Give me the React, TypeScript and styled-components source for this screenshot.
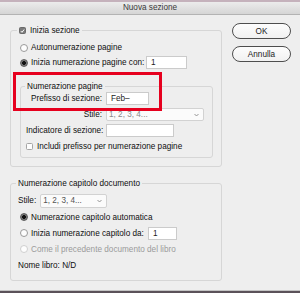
import React from "react";
import styled, { createGlobalStyle } from "styled-components";

const Global = createGlobalStyle`
  html, body { margin: 0; padding: 0; background: #eeeeee; }
  body { font-family: "Liberation Sans", Arial, sans-serif; font-size: 8.2px; color: #0e0e0e; }
  * { box-sizing: border-box; }
`;

const Win = styled.div`
  width: 300px;
  height: 293px;
  display: flex;
  flex-direction: column;
  background: #eeeeee;
  overflow: hidden;
`;

const Desktop = styled.div<{ $h: number; $c: string }>`
  height: ${(p) => p.$h}px;
  flex: none;
  background: ${(p) => p.$c};
`;

const TitleBar = styled.div`
  height: 13px;
  flex: none;
  display: flex;
  align-items: center;
  justify-content: center;
  background: linear-gradient(#ececec, #d5d5d5);
  border-bottom: 1px solid #b3b3b3;
  color: #3a3a3a;
  font-size: 8.2px;
  padding-bottom: 1px;
`;

const Body = styled.div`
  flex: 1;
  display: flex;
  padding: 8px 0 0 10px;
`;

const LeftColumn = styled.div`
  position: relative;
  width: 212px;
  padding-top: 2px;
  display: flex;
  flex-direction: column;
`;

const Group = styled.fieldset<{ $pad: string; $mt?: number }>`
  margin: ${(p) => p.$mt ?? 0}px 0 0 0;
  min-width: 0;
  border: 1px solid #d6d6d6;
  border-radius: 3px;
  padding: ${(p) => p.$pad};
  display: flex;
  flex-direction: column;
`;

const Legend = styled.legend<{ $ml: number }>`
  padding: 0 2px;
  margin-left: ${(p) => p.$ml}px;
  height: 11px;
  line-height: 11px;
  display: flex;
  align-items: center;
  gap: 4px;
`;

const Row = styled.div<{ $h: number; $ml?: number }>`
  height: ${(p) => p.$h}px;
  display: flex;
  align-items: center;
  margin-left: ${(p) => p.$ml ?? 0}px;
  white-space: nowrap;
`;

const RadioCircle = styled.span<{ $on?: boolean; $dis?: boolean }>`
  width: 8px;
  height: 8px;
  flex: none;
  border-radius: 50%;
  border: 1px solid ${(p) => (p.$on ? "#5a5a5a" : p.$dis ? "#cfcfcf" : "#9a9a9a")};
  background: ${(p) => (p.$on ? "radial-gradient(circle, #111 0 1.6px, #7a7a7a 2.2px)" : "#fdfdfd")};
  margin-right: 3px;
`;

const Text = styled.span<{ $w?: number; $dim?: boolean }>`
  ${(p) => (p.$w ? `width: ${p.$w}px;` : "")}
  color: ${(p) => (p.$dim ? "#9b9b9b" : "#0e0e0e")};
  white-space: nowrap;
`;

const Field = styled.div<{ $w: number; $h: number }>`
  width: ${(p) => p.$w}px;
  height: ${(p) => p.$h}px;
  background: #ffffff;
  border: 1px solid #cbcbcb;
  display: flex;
  align-items: center;
  padding-left: 4px;
  color: #1c1c1c;
`;

const Select = styled.div<{ $w: number; $h: number; $light?: boolean; $ml?: number }>`
  width: ${(p) => p.$w}px;
  height: ${(p) => p.$h}px;
  margin-left: ${(p) => p.$ml ?? 0}px;
  background: #fbfbfb;
  border: 1px solid #d2d2d2;
  border-radius: 2px;
  display: flex;
  align-items: center;
  justify-content: space-between;
  padding: 0 4px 0 2px;
  color: ${(p) => (p.$light ? "#8a8a8a" : "#555")};
`;

const Check = styled.span<{ $on?: boolean }>`
  width: 7px;
  height: 7px;
  flex: none;
  border-radius: 1.5px;
  border: 1px solid ${(p) => (p.$on ? "#6a6a6a" : "#a5a5a5")};
  background: ${(p) => (p.$on ? "#7b7b7b" : "#fdfdfd")};
  display: flex;
  align-items: center;
  justify-content: center;
`;

const Grid = styled.div`
  display: grid;
  grid-template-columns: 76px auto;
  column-gap: 4px;
  row-gap: 3px;
  grid-auto-rows: 13px;
  align-items: center;
`;

const GridLabel = styled.span`
  text-align: right;
  white-space: nowrap;
`;

const GridFull = styled.div`
  grid-column: 1 / span 2;
  display: flex;
  align-items: center;
  gap: 4px;
  white-space: nowrap;
`;

const RedMark = styled.div`
  position: absolute;
  left: 3px;
  top: 49px;
  width: 149px;
  height: 39px;
  border: 3px solid #e6001e;
  pointer-events: none;
`;

const ButtonColumn = styled.div`
  margin-left: 10px;
  display: flex;
  flex-direction: column;
  gap: 7px;
`;

const Button = styled.div`
  width: 59px;
  height: 16px;
  border: 1px solid #4e4e4e;
  border-radius: 8px;
  background: linear-gradient(#fdfdfd, #f1f1f1);
  display: flex;
  align-items: center;
  justify-content: center;
  color: #222;
`;

const Chevron = () => (
  <svg width="5" height="4" viewBox="0 0 5 4">
    <path d="M0.5 1 L2.5 3 L4.5 1" fill="none" stroke="#8a8a8a" strokeWidth="0.9" />
  </svg>
);

const Tick = () => (
  <svg width="6" height="6" viewBox="0 0 6 6">
    <path d="M1 3.1 L2.4 4.6 L5 1.2" fill="none" stroke="#fff" strokeWidth="1.2" />
  </svg>
);

export default function App() {
  return (
    <>
      <Global />
      <Win>
        <Desktop $h={2} $c="#c5b2bc" />
        <TitleBar>Nuova sezione</TitleBar>
        <Body>
          <LeftColumn>
            <Group $pad="4px 8px 8px 9px">
              <Legend $ml={-3}>
                <Check $on>
                  <Tick />
                </Check>
                <span>Inizia sezione</span>
              </Legend>
              <Row $h={15}>
                <RadioCircle />
                <Text>Autonumerazione pagine</Text>
              </Row>
              <Row $h={15}>
                <RadioCircle $on />
                <Text $w={115}>Inizia numerazione pagine con:</Text>
                <Field $w={41} $h={13}>1</Field>
              </Row>
              <Group $pad="0 8px 4px 5px" $mt={11}>
                <Legend $ml={-1}>Numerazione pagine</Legend>
                <Grid>
                  <GridLabel>Prefisso di sezione:</GridLabel>
                  <Field $w={43} $h={13}>Feb–</Field>
                  <GridLabel>Stile:</GridLabel>
                  <Select $w={98} $h={13} $light>
                    <span>1, 2, 3, 4...</span>
                    <Chevron />
                  </Select>
                  <GridLabel>Indicatore di sezione:</GridLabel>
                  <Field $w={68} $h={13} />
                  <GridFull>
                    <Check />
                    <span>Includi prefisso per numerazione pagine</span>
                  </GridFull>
                </Grid>
              </Group>
            </Group>
            <Group $pad="3px 8px 7px 7px" $mt={11}>
              <Legend $ml={-2}>Numerazione capitolo documento</Legend>
              <Row $h={17}>
                <Text>Stile:</Text>
                <Select $w={67} $h={14} $ml={4}>
                  <span>1, 2, 3, 4...</span>
                  <Chevron />
                </Select>
              </Row>
              <Row $h={16} $ml={2}>
                <RadioCircle $on />
                <Text>Numerazione capitolo automatica</Text>
              </Row>
              <Row $h={16} $ml={2}>
                <RadioCircle />
                <Text $w={117}>Inizia numerazione capitolo da:</Text>
                <Field $w={29} $h={13}>1</Field>
              </Row>
              <Row $h={16} $ml={2}>
                <RadioCircle $dis />
                <Text $dim>Come il precedente documento del libro</Text>
              </Row>
              <Row $h={16}>
                <Text>Nome libro: N/D</Text>
              </Row>
            </Group>
            <RedMark />
          </LeftColumn>
          <ButtonColumn>
            <Button>OK</Button>
            <Button>Annulla</Button>
          </ButtonColumn>
        </Body>
        <Desktop $h={1} $c="#c4c4c4" />
        <Desktop $h={2} $c="#5b5259" />
      </Win>
    </>
  );
}
